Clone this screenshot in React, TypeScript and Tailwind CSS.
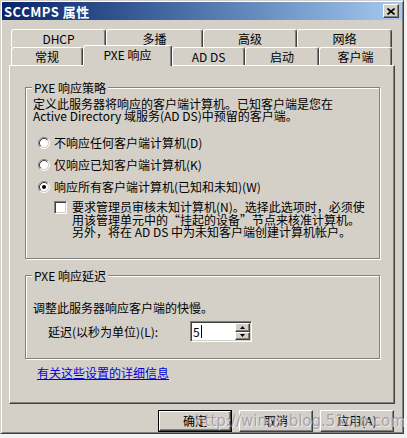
import React from 'react';

const raised =
  'border border-t-white border-l-white border-r-[#404040] border-b-[#404040] shadow-[inset_-1px_-1px_0_#808080]';
const sunken =
  'border border-t-[#808080] border-l-[#808080] border-r-white border-b-white shadow-[inset_1px_1px_0_#404040,inset_-1px_-1px_0_#d4d0c8]';
const tabBase =
  'flex items-center justify-center border-t border-l border-r border-t-white border-l-white border-r-[#404040] shadow-[inset_-1px_0_0_#808080] rounded-tl-[3px] rounded-tr-[3px] bg-[#d4d0c8]';

function Radio({ checked = false, label }: { checked?: boolean; label: string }) {
  return (
    <div className="flex h-[16px] items-center ml-[5px]">
      <svg width="12" height="12" viewBox="0 0 12 12" className="shrink-0">
        <circle cx="6" cy="6" r="4.5" fill="#fff" />
        <path d="M2.11 9.89 A5.5 5.5 0 0 1 9.89 2.11" stroke="#808080" fill="none" />
        <path d="M9.89 2.11 A5.5 5.5 0 0 1 2.11 9.89" stroke="#fff" fill="none" />
        <path d="M2.82 9.18 A4.5 4.5 0 0 1 9.18 2.82" stroke="#404040" fill="none" />
        <path d="M9.18 2.82 A4.5 4.5 0 0 1 2.82 9.18" stroke="#d4d0c8" fill="none" />
        {checked && <circle cx="6" cy="6" r="2" fill="#000" />}
      </svg>
      <span className="ml-[4px]">{label}</span>
    </div>
  );
}

function GroupBox({
  title,
  className = '',
  children,
}: {
  title: string;
  className?: string;
  children: React.ReactNode;
}) {
  return (
    <div
      className={`relative border border-[#808080] shadow-[inset_1px_1px_0_#fff,1px_1px_0_#fff] ${className}`}
    >
      <span className="absolute top-[-7px] left-[6px] px-[2px] bg-[#d4d0c8] leading-[13px]">{title}</span>
      {children}
    </div>
  );
}

function Button({ label, isDefault = false }: { label: string; isDefault?: boolean }) {
  return (
    <div className={`w-[74px] h-[22px] ${isDefault ? 'border border-black' : ''}`}>
      <div className={`w-full h-full flex items-center justify-center ${raised}`}>{label}</div>
    </div>
  );
}

export default function App() {
  return (
    <div className="w-[407px] h-[438px] bg-[#f2f2f2] relative overflow-hidden text-[12px] leading-[12px] text-black font-['Noto_Sans_CJK_SC','Liberation_Sans',sans-serif]">
      <div className="w-[404px] h-[434px] bg-[#d4d0c8] p-[1px] border border-t-[#d4d0c8] border-l-[#d4d0c8] border-r-[#404040] border-b-[#404040] shadow-[inset_1px_1px_0_#fff,inset_-1px_-1px_0_#808080]">
        {/* title bar */}
        <div className="h-[18px] flex items-center justify-between bg-gradient-to-r from-[#0a246a] to-[#a6caf0]">
          <span className="pl-[2px] text-white font-bold text-[13px] leading-[13px] tracking-[0.5px]">SCCMPS 属性</span>
          <div className={`w-[16px] h-[14px] mr-[3px] bg-[#d4d0c8] flex items-center justify-center ${raised}`}>
            <svg width="8" height="7" viewBox="0 0 8 7">
              <path d="M0.5 0.5 L7.5 6.5 M7.5 0.5 L0.5 6.5" stroke="#000" strokeWidth="1.6" />
            </svg>
          </div>
        </div>

        {/* tab control */}
        <div className="ml-[7px] mt-[9px] w-[386px]">
          <div className="flex pl-[2px] h-[18px]">
            <div className={`${tabBase} w-[95px] h-[18px]`}>DHCP</div>
            <div className={`${tabBase} w-[97px] h-[18px]`}>多播</div>
            <div className={`${tabBase} w-[94px] h-[18px]`}>高级</div>
            <div className={`${tabBase} w-[95px] h-[18px]`}>网络</div>
          </div>
          <div className="relative z-10 flex pl-[2px] h-[18px]">
            <div className={`${tabBase} w-[72px] h-[18px]`}>常规</div>
            <div className={`${tabBase} w-[89px] h-[21px] -mt-[2px] pb-[2px]`}>PXE 响应</div>
            <div className={`${tabBase} w-[73px] h-[18px]`}>AD DS</div>
            <div className={`${tabBase} w-[74px] h-[18px]`}>启动</div>
            <div className={`${tabBase} w-[73px] h-[18px]`}>客户端</div>
          </div>
          <div className={`h-[339px] ${raised} pl-[15px] pt-[21px]`}>
            <GroupBox title="PXE 响应策略" className="w-[355px] h-[172px] pt-[10px] pl-[7px]">
              <div>
                定义此服务器将响应的客户端计算机。已知客户端是您在
                <br />
                Active Directory 域服务(AD DS)中预留的客户端。
              </div>
              <div className="mt-[13px] flex flex-col gap-[6px]">
                <Radio label="不响应任何客户端计算机(D)" />
                <Radio label="仅响应已知客户端计算机(K)" />
                <Radio checked label="响应所有客户端计算机(已知和未知)(W)" />
              </div>
              <div className="mt-[6px] ml-[21px] flex items-start">
                <div className={`w-[13px] h-[13px] bg-white shrink-0 ${sunken}`} />
                <div className="ml-[5px] leading-[12.5px]">
                  要求管理员审核未知计算机(N)。选择此选项时，必须使
                  <br />
                  用该管理单元中的“挂起的设备”节点来核准计算机。
                  <br />
                  另外，将在 AD DS 中为未知客户端创建计算机帐户。
                </div>
              </div>
            </GroupBox>

            <GroupBox title="PXE 响应延迟" className="w-[355px] h-[84px] mt-[16px] pt-[26px] pl-[7px]">
              <div>调整此服务器响应客户端的快慢。</div>
              <div className="mt-[7px] ml-[15px] flex items-center">
                <span className="w-[142px]">延迟(以秒为单位)(L):</span>
                <div className={`w-[62px] h-[21px] bg-white flex ${sunken} p-[1px]`}>
                  <div className="flex-1 flex items-center pl-[1px]">
                    <span>5</span>
                    <span className="w-[1px] h-[13px] bg-black ml-[1px]" />
                  </div>
                  <div className="w-[15px] flex flex-col">
                    <div className={`h-[9px] bg-[#d4d0c8] flex items-center justify-center ${raised}`}>
                      <svg width="5" height="3" viewBox="0 0 5 3">
                        <path d="M2.5 0 L5 3 L0 3 Z" fill="#000" />
                      </svg>
                    </div>
                    <div className={`h-[9px] bg-[#d4d0c8] flex items-center justify-center ${raised}`}>
                      <svg width="5" height="3" viewBox="0 0 5 3">
                        <path d="M0 0 L5 0 L2.5 3 Z" fill="#000" />
                      </svg>
                    </div>
                  </div>
                </div>
              </div>
            </GroupBox>

            <div className="mt-[8px] ml-[12px] text-[#0000e0] underline">有关这些设置的详细信息</div>
          </div>
        </div>

        {/* dialog buttons */}
        <div className="mt-[6px] pr-[8px] flex justify-end gap-[7px]">
          <Button label="确定" isDefault />
          <Button label="取消" />
          <Button label="应用(A)" />
        </div>
      </div>

      <div className="absolute left-[195px] top-[413px] whitespace-nowrap text-[15px] leading-[16px] font-['DejaVu_Sans',sans-serif] text-[#8a8aa0]/70 [text-shadow:1px_1px_0_rgba(255,255,255,0.6)]">
        http://winos.blog.51cto.com
      </div>
    </div>
  );
}
